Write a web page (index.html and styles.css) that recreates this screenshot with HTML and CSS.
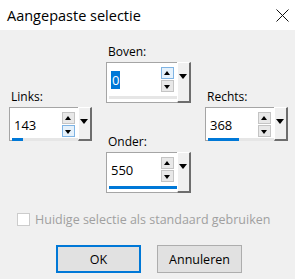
FILE: index.html
```html
<!DOCTYPE html>
<html lang="nl">
  <head>
    <meta charset="UTF-8" />
    <meta name="viewport" content="width=device-width, initial-scale=1.0" />
    <title>Aangepaste selectie</title>
    <link rel="stylesheet" href="styles.css">
  </head>
  <body>
    <div class="titlebar">
      <span class="title">Aangepaste selectie</span>
      <svg class="close" width="13" height="13" viewBox="0 0 13 13">
        <path d="M0.5 0.5 L12.5 12.5 M12.5 0.5 L0.5 12.5" stroke="#111" stroke-width="1" fill="none" />
      </svg>
    </div>

    <div class="fields">
      <div class="col side">
        <label class="lbl">Links:</label>
        <div class="spinbox">
          <div class="main">
            <div class="line">
              <span class="value">143</span>
              <div class="spin">
                <span class="arrow up"></span>
                <span class="arrow down hot"></span>
              </div>
            </div>
            <div class="track"><div class="fill" style="width: 11px"></div></div>
          </div>
          <div class="drop"></div>
        </div>
      </div>

      <div class="col middle">
        <label class="lbl">Boven:</label>
        <div class="spinbox tall">
          <div class="main">
            <div class="line">
              <span class="value"><span class="sel">0</span></span>
              <div class="spin">
                <span class="arrow up hot"></span>
                <span class="arrow down"></span>
              </div>
            </div>
            <div class="track"></div>
          </div>
          <div class="drop"></div>
        </div>

        <label class="lbl second">Onder:</label>
        <div class="spinbox tall">
          <div class="main">
            <div class="line">
              <span class="value">550</span>
              <div class="spin">
                <span class="arrow up"></span>
                <span class="arrow down"></span>
              </div>
            </div>
            <div class="track"><div class="fill" style="width: 69px"></div></div>
          </div>
          <div class="drop"></div>
        </div>
      </div>

      <div class="col side">
        <label class="lbl">Rechts:</label>
        <div class="spinbox">
          <div class="main">
            <div class="line">
              <span class="value">368</span>
              <div class="spin">
                <span class="arrow up"></span>
                <span class="arrow down"></span>
              </div>
            </div>
            <div class="track"><div class="fill" style="width: 31px"></div></div>
          </div>
          <div class="drop"></div>
        </div>
      </div>
    </div>

    <div class="check">
      <span class="box"></span>
      <span class="check-text">Huidige selectie als standaard gebruiken</span>
    </div>

    <div class="buttons">
      <button class="btn default">OK</button>
      <button class="btn">Annuleren</button>
    </div>
  </body>
</html>
```

FILE: styles.css
```css
* {
  margin: 0;
  padding: 0;
  box-sizing: border-box;
}
body {
  font-family: "Open Sans", "Noto Sans", sans-serif;
  font-size: 12px;
  background: #f0f0f0;
  color: #000;
  width: 295px;
  height: 279px;
  overflow: hidden;
}

.titlebar {
  height: 30px;
  background: #fff;
  display: flex;
  justify-content: space-between;
  align-items: center;
  padding: 0 6px 0 7px;
}
.title {
  font-size: 14.5px;
  color: #000;
}
.close {
  display: block;
}

.fields {
  display: flex;
  gap: 14px;
  padding-left: 9px;
}
.col {
  display: flex;
  flex-direction: column;
}
.side {
  width: 83px;
  padding-top: 59px;
}
.middle {
  width: 85px;
  padding-top: 14px;
}
.lbl {
  display: block;
  height: 16px;
  line-height: 16px;
  padding-left: 2px;
  margin-bottom: 2px;
}
.second {
  margin-top: 31px;
}

.spinbox {
  display: flex;
  height: 34px;
  background: #fff;
  border: 1px solid #a5a5a5;
}
.spinbox.tall {
  height: 41px;
}
.main {
  flex: 1;
  display: flex;
  flex-direction: column;
  padding: 4px 0 0 2px;
}
.line {
  display: flex;
  align-items: center;
  height: 25px;
}
.value {
  flex: 1;
  padding-left: 2px;
  font-size: 13px;
  line-height: 16px;
}
.sel {
  background: #0078d7;
  color: #fff;
  padding: 0 1px;
}
.spin {
  display: flex;
  flex-direction: column;
  gap: 1px;
  width: 13px;
  margin-right: 3px;
}
.arrow {
  position: relative;
  height: 12px;
  background: #e8e8e8;
  border: 1px solid #c4c4c4;
}
.arrow.hot {
  background: #e5f1fb;
  border-color: #7fb4e4;
}
.arrow::after {
  content: "";
  position: absolute;
  left: 2px;
  border-left: 3.5px solid transparent;
  border-right: 3.5px solid transparent;
}
.up::after {
  top: 3px;
  border-bottom: 4px solid #000;
}
.down::after {
  top: 4px;
  border-top: 4px solid #000;
}

.track {
  height: 3px;
  margin-top: 1px;
  margin-right: -1px;
  background: #e6e6e6;
}
.tall .track {
  margin-top: 4px;
}
.fill {
  height: 3px;
  background: #0078d7;
}

.drop {
  position: relative;
  width: 14px;
  margin: -1px -1px -1px 0;
  background: #f0f0f0;
  border-top: 1px solid #fff;
  border-left: 1px solid #fff;
  border-right: 2px solid #6d6d6d;
  border-bottom: 2px solid #6d6d6d;
}
.drop::after {
  content: "";
  position: absolute;
  top: 11px;
  left: 1px;
  border-left: 4.5px solid transparent;
  border-right: 4.5px solid transparent;
  border-top: 5px solid #000;
}

.check {
  display: flex;
  align-items: center;
  gap: 5px;
  height: 16px;
  margin-top: 18px;
  padding-left: 17px;
  color: #a0a0a0;
  font-size: 12.5px;
}
.box {
  width: 13px;
  height: 13px;
  background: #fff;
  border: 1px solid #cccccc;
}

.buttons {
  display: flex;
  gap: 16px;
  margin-top: 18px;
  padding-left: 56px;
}
.btn {
  width: 85px;
  height: 28px;
  font-family: "Open Sans", "Noto Sans", sans-serif;
  font-size: 12.5px;
  color: #000;
  background: #e1e1e1;
  border: 1px solid #adadad;
}
.btn.default {
  border: 2px solid #0078d7;
}
```
